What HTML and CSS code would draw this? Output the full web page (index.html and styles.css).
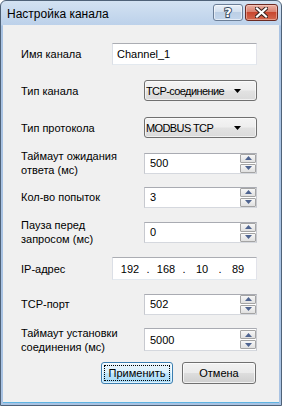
FILE: index.html
```html
<!DOCTYPE html>
<html lang="ru">
<head>
<meta charset="utf-8">
<title>Настройка канала</title>
<link rel="stylesheet" href="styles.css">
</head>
<body>
<div class="window">
  <div class="titlebar">
    <span class="title">Настройка канала</span>
    <div class="caption-btns">
      <span class="cap-btn cap-help"><span class="q">?</span></span>
      <span class="cap-btn cap-close">
        <svg width="13" height="11" viewBox="0 0 13 11"><path d="M2 1.5 L11 9.5 M11 1.5 L2 9.5" stroke="#3a2420" stroke-width="4.2" stroke-linecap="square"/><path d="M2 1.5 L11 9.5 M11 1.5 L2 9.5" stroke="#fff" stroke-width="2.2" stroke-linecap="square"/></svg>
      </span>
    </div>
  </div>
  <div class="client">
    <div class="form">
      <div class="label">Имя канала</div>
      <div class="field text"><span>Channel_1</span></div>

      <div class="label">Тип канала</div>
      <div class="combo"><span>TCP-соединение</span><svg class="arrow" width="7" height="4" viewBox="0 0 7 4"><path d="M0 0 H7 L3.5 4 Z" fill="#000"/></svg></div>

      <div class="label">Тип протокола</div>
      <div class="combo"><span>MODBUS TCP</span><svg class="arrow" width="7" height="4" viewBox="0 0 7 4"><path d="M0 0 H7 L3.5 4 Z" fill="#000"/></svg></div>

      <div class="label">Таймаут ожидания<br>ответа (мс)</div>
      <div class="field spin"><span>500</span><div class="spin-btns"><span class="spin-btn"><svg width="7" height="4" viewBox="0 0 7 4"><path d="M0 4 H7 L3.5 0 Z" fill="#4f6490"/></svg></span><span class="spin-btn"><svg width="7" height="4" viewBox="0 0 7 4"><path d="M0 0 H7 L3.5 4 Z" fill="#4f6490"/></svg></span></div></div>

      <div class="label">Кол-во попыток</div>
      <div class="field spin"><span>3</span><div class="spin-btns"><span class="spin-btn"><svg width="7" height="4" viewBox="0 0 7 4"><path d="M0 4 H7 L3.5 0 Z" fill="#4f6490"/></svg></span><span class="spin-btn"><svg width="7" height="4" viewBox="0 0 7 4"><path d="M0 0 H7 L3.5 4 Z" fill="#4f6490"/></svg></span></div></div>

      <div class="label">Пауза перед<br>запросом (мс)</div>
      <div class="field spin"><span>0</span><div class="spin-btns"><span class="spin-btn"><svg width="7" height="4" viewBox="0 0 7 4"><path d="M0 4 H7 L3.5 0 Z" fill="#4f6490"/></svg></span><span class="spin-btn"><svg width="7" height="4" viewBox="0 0 7 4"><path d="M0 0 H7 L3.5 4 Z" fill="#4f6490"/></svg></span></div></div>

      <div class="label">IP-адрес</div>
      <div class="field ip"><span class="octet">192</span><span class="dot">.</span><span class="octet">168</span><span class="dot">.</span><span class="octet">10</span><span class="dot">.</span><span class="octet">89</span></div>

      <div class="label">TCP-порт</div>
      <div class="field spin"><span>502</span><div class="spin-btns"><span class="spin-btn"><svg width="7" height="4" viewBox="0 0 7 4"><path d="M0 4 H7 L3.5 0 Z" fill="#4f6490"/></svg></span><span class="spin-btn"><svg width="7" height="4" viewBox="0 0 7 4"><path d="M0 0 H7 L3.5 4 Z" fill="#4f6490"/></svg></span></div></div>

      <div class="label">Таймаут установки<br>соединения (мс)</div>
      <div class="field spin tall"><span>5000</span><div class="spin-btns"><span class="spin-btn"><svg width="7" height="4" viewBox="0 0 7 4"><path d="M0 4 H7 L3.5 0 Z" fill="#4f6490"/></svg></span><span class="spin-btn"><svg width="7" height="4" viewBox="0 0 7 4"><path d="M0 0 H7 L3.5 4 Z" fill="#4f6490"/></svg></span></div></div>
    </div>
    <div class="actions">
      <button class="btn btn-default"><span class="focus">Применить</span></button>
      <button class="btn btn-cancel"><span>Отмена</span></button>
    </div>
  </div>
</div>
</body>
</html>
```
FILE: styles.css
```css
* { box-sizing: border-box; }
html, body { margin: 0; padding: 0; }
body {
  width: 282px;
  height: 406px;
  font-family: "Liberation Sans", Arial, sans-serif;
  font-size: 11px;
  color: #000;
  background: #fff;
}
.window {
  width: 282px;
  height: 406px;
  display: flex;
  flex-direction: column;
  border: 1px solid #4f6278;
  border-radius: 6px 6px 0 0;
  background: linear-gradient(to bottom, #d3e2f2 0, #bcd1ea 24px, #a9c3e3 25px, #a9c3e3 100%);
  overflow: hidden;
}
.titlebar {
  height: 24px;
  flex: none;
  display: flex;
  align-items: flex-start;
  padding: 0 3px 0 6px;
}
.title {
  flex: 1;
  font-size: 12px;
  line-height: 14px;
  margin-top: 6px;
  color: #000;
}
.caption-btns {
  display: flex;
  gap: 2px;
  margin-top: 3px;
}
.cap-btn {
  height: 17px;
  border-radius: 3px;
  display: flex;
  align-items: center;
  justify-content: center;
}
.cap-help {
  width: 30px;
  border: 1px solid #6b7e97;
  background: linear-gradient(to bottom, #e9f0f8 0%, #d3e0ef 45%, #bccfe5 50%, #c3d6ec 100%);
  box-shadow: inset 0 0 0 1px rgba(255,255,255,0.55);
}
.cap-help .q {
  font-family: "DejaVu Sans", sans-serif;
  font-weight: bold;
  font-size: 13px;
  line-height: 13px;
  color: #fff;
  -webkit-text-stroke: 2px #3c4d61;
  paint-order: stroke fill;
}
.cap-close {
  width: 33px;
  border: 1px solid #6c2a22;
  background: linear-gradient(to bottom, #eab0a3 0%, #d98170 45%, #c8462f 50%, #d2684f 100%);
  box-shadow: inset 0 0 0 1px rgba(255,220,210,0.45);
}
.client {
  flex: 1;
  margin: 0 2px 2px 2px;
  background: #f0f0f0;
  padding: 11px 0 0 18px;
  border-bottom: 1px solid #5fb4e2;
}
.form {
  display: grid;
  grid-template-columns: 91px 145px;
  grid-template-rows: 36px 37px 37px 34px 34px 36px 37px 34px 37px;
  align-items: center;
}
.label {
  line-height: 14px;
  white-space: nowrap;
}
.field {
  justify-self: end;
  background: #fff;
  border: 1px solid;
  border-color: #abadb3 #e2e3ea #e3e9ef #dbdfe6;
  display: flex;
  align-items: center;
}
.text {
  width: 145px;
  height: 22px;
  padding-left: 4px;
}
.combo {
  justify-self: end;
  width: 113px;
  height: 21px;
  border: 1px solid #707070;
  border-radius: 3px;
  background: linear-gradient(to bottom, #f4f4f4 0%, #eeeeee 48%, #e2e2e2 52%, #dadada 100%);
  box-shadow: inset 0 0 0 1px rgba(255,255,255,0.6);
  display: flex;
  align-items: center;
  padding-left: 1px;
  letter-spacing: -0.6px;
  white-space: nowrap;
}
.combo .arrow {
  flex: none;
  margin-left: auto;
  margin-right: 15px;
}
.spin {
  width: 113px;
  height: 21px;
  padding-left: 5px;
  border-color: #a9abb2 #c7c9cf #d5d8de #c7c9cf;
}
.spin.tall { height: 23px; }
.spin-btns {
  margin-left: auto;
  margin-right: 0;
  display: flex;
  flex-direction: column;
  gap: 1px;
}
.spin-btn {
  width: 16px;
  height: 9px;
  border: 1px solid #a4a4a4;
  border-radius: 1px;
  background: linear-gradient(to bottom, #f7f7f7, #e0e0e0);
  display: flex;
  align-items: center;
  justify-content: center;
}
.ip {
  width: 145px;
  height: 23px;
  padding-left: 3px;
}
.octet { width: 28px; text-align: center; }
.dot { width: 8px; text-align: center; }
.actions {
  width: 236px;
  display: flex;
  justify-content: flex-end;
  gap: 9px;
  margin-top: 4px;
  padding-right: 1px;
}
.btn {
  height: 22px;
  padding: 2px;
  font: inherit;
  color: #000;
  border-radius: 3px;
  display: flex;
  align-items: stretch;
}
.btn > span {
  flex: 1;
  display: flex;
  align-items: center;
  justify-content: center;
}
.btn-default {
  width: 72px;
  border: 1px solid #3c7fb1;
  background: linear-gradient(to bottom, #eaf6fd 0%, #d9f0fc 48%, #bee6fd 52%, #a7d9f5 100%);
  box-shadow: inset 0 0 0 1px rgba(255,255,255,0.6);
}
.btn-default .focus {
  border: 1px dotted #000;
}
.btn-cancel {
  width: 74px;
  border: 1px solid #707070;
  background: linear-gradient(to bottom, #f2f2f2 0%, #ebebeb 48%, #dddddd 52%, #cfcfcf 100%);
  box-shadow: inset 0 0 0 1px rgba(255,255,255,0.7);
}
```
